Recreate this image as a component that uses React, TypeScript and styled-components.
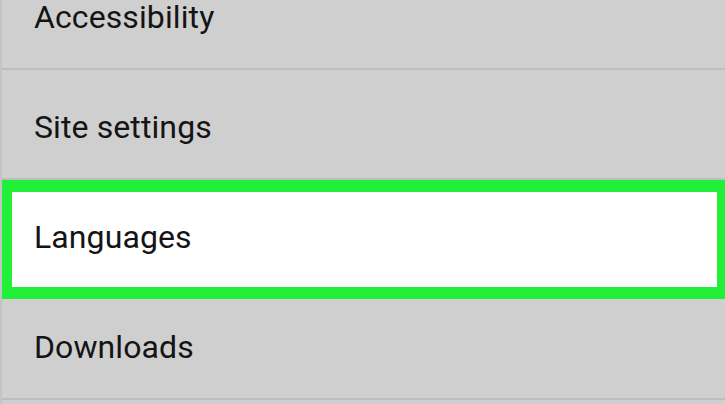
import React from "react";
import styled, { createGlobalStyle } from "styled-components";

const Global = createGlobalStyle`
  html, body { margin: 0; padding: 0; background: #cfcfcf; overflow: hidden; }
  body { width: 725px; height: 404px; }
`;

const Screen = styled.div`
  width: 725px;
  height: 404px;
  overflow: hidden;
  background: #cfcfcf;
  border-left: 2px solid #c4c4c4;
  box-sizing: border-box;
`;

const List = styled.ul`
  list-style: none;
  margin: -40px 0 0 0;
  padding: 0;
  display: flex;
  flex-direction: column;
`;

const Row = styled.li<{ $active?: boolean }>`
  position: relative;
  height: 110px;
  box-sizing: border-box;
  display: flex;
  align-items: center;
  padding: 5px 0 0 32px;
  border-bottom: 2px solid #bdbdbd;
  background: ${(p) => (p.$active ? "#ffffff" : "transparent")};
  font-family: Roboto, "Liberation Sans", sans-serif;
  font-size: 32px;
  color: #141414;
  letter-spacing: 0.1px;
`;

const Highlight = styled.span`
  position: absolute;
  left: -2px;
  right: 0;
  top: 0;
  bottom: -11px;
  border: 12px solid #22f038;
  border-right-width: 8px;
  pointer-events: none;
  z-index: 1;
`;

const items = ["Accessibility", "Site settings", "Languages", "Downloads"];

export default function App() {
  return (
    <>
      <Global />
      <Screen>
        <List>
          {items.map((t) => (
            <Row key={t} $active={t === "Languages"}>
              {t}
              {t === "Languages" && <Highlight />}
            </Row>
          ))}
        </List>
      </Screen>
    </>
  );
}
